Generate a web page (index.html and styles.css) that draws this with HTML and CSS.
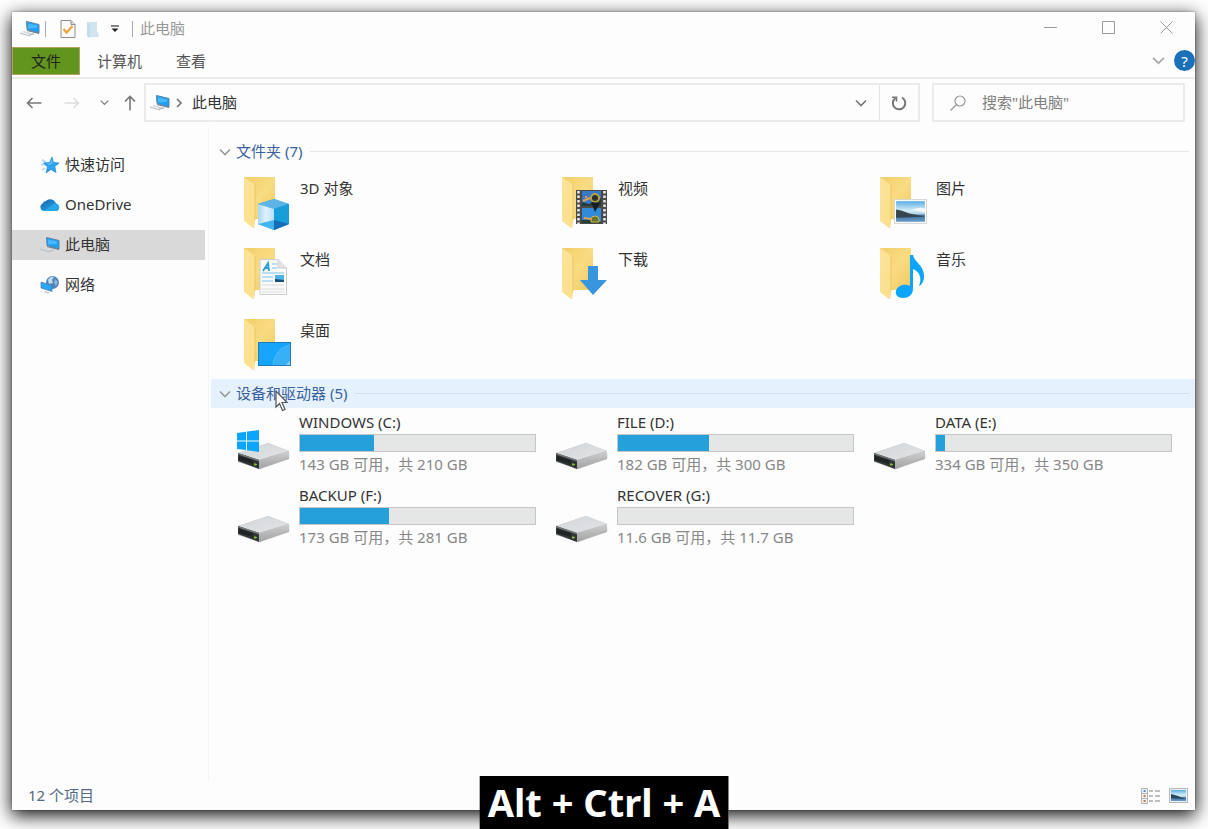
FILE: index.html
```html
<!DOCTYPE html>
<html lang="zh-CN">
<head>
<meta charset="utf-8">
<title>此电脑</title>
<link rel="stylesheet" href="styles.css">
</head>
<body>
<svg class="sprite" aria-hidden="true">
  <defs>
    <linearGradient id="g-back" x1="0" y1="0" x2="1" y2="1"><stop offset="0" stop-color="#f3cd68"/><stop offset=".5" stop-color="#f8dc82"/><stop offset="1" stop-color="#efc862"/></linearGradient>
    <linearGradient id="g-front" x1="0" y1="0" x2="1" y2="1"><stop offset="0" stop-color="#fbe39a"/><stop offset="1" stop-color="#fbdf8a"/></linearGradient>
    <linearGradient id="g-top" x1="0" y1="0" x2="1" y2="1"><stop offset="0" stop-color="#d3d6d9"/><stop offset="1" stop-color="#e2e4e6"/></linearGradient>
    <linearGradient id="g-side" x1="0" y1="0" x2="0" y2="1"><stop offset="0" stop-color="#cfcfcf"/><stop offset="1" stop-color="#a2a2a2"/></linearGradient>
    <linearGradient id="g-sky" x1="0" y1="0" x2="0" y2="1"><stop offset="0" stop-color="#5aaee4"/><stop offset=".45" stop-color="#d4ecf7"/><stop offset=".6" stop-color="#b9d6e4"/><stop offset=".7" stop-color="#3a6fa3"/><stop offset="1" stop-color="#6f9fc8"/></linearGradient>
    <linearGradient id="g-glass" x1="0" y1="0" x2="1" y2="0"><stop offset="0" stop-color="#a9d6f0"/><stop offset=".5" stop-color="#dff1fa"/><stop offset="1" stop-color="#b7e2f6"/></linearGradient>
    <linearGradient id="g-cloud" x1="0" y1="0" x2="1" y2="1"><stop offset="0" stop-color="#1262b3"/><stop offset="1" stop-color="#2eaee8"/></linearGradient>
  </defs>
  <symbol id="folder" viewBox="0 0 54 56">
    <path d="M7 1H38V43H18L7 40Z" fill="url(#g-back)"/>
    <path d="M7 1L18 9V44L16 52L7 45Z" fill="url(#g-front)"/>
    <path d="M18 9V44L17 52" fill="none" stroke="#edc765" stroke-width="1"/>
    <path d="M18 44L20 43L22 47L17 52Z" fill="#fffdf6"/>
  </symbol>
  <symbol id="pc" viewBox="0 0 20 16">
    <path d="M6.500 0.500L19 3.500V12L7 8.500Z" fill="#1d9ff3" stroke="#5d84a5" stroke-width="1"/>
    <path d="M8 2.500L17 4.500V7L8 7.500Z" fill="#49b9ff"/>
    <path d="M7 9L19 12V13L7 10Z" fill="#66798a"/>
    <path d="M4 10L15 13L11 14L2 11Z" fill="#d5d9dc"/>
    <path d="M0 12L10 15M9 14L14 13" stroke="#bdc2c6" stroke-width="1.300" fill="none"/>
  </symbol>
  <symbol id="drive" viewBox="0 0 54 28">
    <path d="M4 20L22 28L54 15L52 11L28 24Z" fill="#eee"/>
    <path d="M1 11L31 1L52 9V17L23 27L1 20Z" fill="#b3b3b3"/>
    <path d="M1 11L31 1L52 9L22 18Z" fill="url(#g-top)"/>
    <path d="M22 18L52 9V15L22 27Z" fill="url(#g-side)"/>
    <path d="M1 11L22 18V27L1 19Z" fill="#303638"/>
    <path d="M2 14L16 18V22L2 18Z" fill="#202524"/>
    <path d="M1 11L22 18V19.500L1 12.500Z" fill="#737878"/>
    <path d="M18 21V24M17 22.500H20" stroke="#85bd30" stroke-width="1"/>
  </symbol>
  <symbol id="landscape" viewBox="0 0 32 24">
    <rect x=".5" y=".5" width="31" height="23" fill="#fff" stroke="#d4d4d4"/>
    <rect x="2" y="2" width="28" height="20" fill="url(#g-sky)"/>
    <path d="M2 10L7 11L15 14L26 16L30 17L2 18Z" fill="#37454e"/>
    <path d="M17 10L26 8L30 9V13Z" fill="#f2f7f9"/>
  </symbol>
  <symbol id="chev" viewBox="0 0 12 12"><path d="M1 3.500L6 8.500L11 3.500" fill="none" stroke="currentColor" stroke-width="1.600"/></symbol>
</svg>

<div class="window">
  <header class="titlebar">
    <svg class="ico-pc"><use href="#pc"/></svg>
    <span class="sep sep-a"></span>
    <button class="quick" aria-label="属性">
      <svg width="16" height="18" viewBox="0 0 16 18"><path d="M1 .5H11L15 4.500V17.500H1Z" fill="#fafafa" stroke="#8e8e8e"/><path d="M11 .5V4.500H15" fill="#ddd" stroke="#8e8e8e"/><path d="M3.500 9L6.500 12.500L12.500 6" fill="none" stroke="#e9a53b" stroke-width="2.200"/></svg>
    </button>
    <button class="quick quick-folder" aria-label="新建文件夹">
      <svg width="13" height="17" viewBox="0 0 13 17"><path d="M1 1H11V11L12.500 12V16H4V17L1 15Z" fill="#d3e4f1"/><path d="M1 1L4 3V17L1 15Z" fill="#c5dcec"/></svg>
    </button>
    <button class="quick" aria-label="自定义快速访问工具栏">
      <svg width="8" height="8" viewBox="0 0 8 8"><path d="M0 1H8" stroke="#444" stroke-width="1.300"/><path d="M.5 3.500H7.500L4 7Z" fill="#222"/></svg>
    </button>
    <span class="sep sep-b"></span>
    <h1 class="title">此电脑</h1>
    <div class="controls">
      <button aria-label="最小化"><svg width="13" height="13" viewBox="0 0 13 13"><path d="M0 6.500H13"/></svg></button>
      <button aria-label="最大化"><svg width="13" height="13" viewBox="0 0 13 13"><path d="M.5 .5H12.500V12.500H.5Z"/></svg></button>
      <button aria-label="关闭"><svg width="13" height="13" viewBox="0 0 13 13"><path d="M.5 .5L12.500 12.500M12.500 .5L.5 12.500"/></svg></button>
    </div>
  </header>

  <nav class="ribbon">
    <button class="tab tab-file">文件</button>
    <button class="tab">计算机</button>
    <button class="tab">查看</button>
    <button class="expand" aria-label="展开功能区"><svg width="13" height="13"><use href="#chev"/></svg></button>
    <button class="help" aria-label="帮助">?</button>
  </nav>

  <div class="addressbar">
    <div class="history">
      <button aria-label="后退"><svg width="16" height="12" viewBox="0 0 16 12"><path d="M6.500 1L1.500 6L6.500 11M1.500 6H15.500"/></svg></button>
      <button class="dim" aria-label="前进"><svg width="16" height="12" viewBox="0 0 16 12"><path d="M9.500 1L14.500 6L9.500 11M14.500 6H.5"/></svg></button>
      <button class="narrow" aria-label="最近浏览的位置"><svg width="9" height="9"><use href="#chev"/></svg></button>
      <button class="narrow" aria-label="向上"><svg width="12" height="16" viewBox="0 0 12 16"><path d="M1 6.500L6 1.500L11 6.500M6 1.500V15.500"/></svg></button>
    </div>
    <div class="path">
      <svg class="ico-pc"><use href="#pc"/></svg>
      <svg class="crumb" width="6" height="10" viewBox="0 0 6 10"><path d="M1 1L5 5L1 9" fill="none" stroke="#777" stroke-width="1.600"/></svg>
      <span class="here">此电脑</span>
      <button class="drop" aria-label="以前的位置"><svg width="12" height="12"><use href="#chev"/></svg></button>
      <button class="refresh" aria-label="刷新"><svg width="16" height="16" viewBox="0 0 16 16"><path d="M4.500 3A6.200 6.200 0 1 0 11 2.600" fill="none" stroke="#777" stroke-width="2"/><path d="M1 2.200H5.500V6.500" fill="none" stroke="#777" stroke-width="1.600"/></svg></button>
    </div>
    <label class="search">
      <svg width="16" height="16" viewBox="0 0 16 16"><circle cx="10" cy="6" r="5" fill="none" stroke="#999" stroke-width="1.200"/><path d="M6.300 9.700L.5 15.500" stroke="#999" stroke-width="1.300"/></svg>
      <input type="text" placeholder='搜索"此电脑"' aria-label="搜索">
    </label>
  </div>

  <div class="body">
    <nav class="sidebar">
      <a href="#"><svg viewBox="0 0 20 20"><path d="M2 5L6 7M1 10L6 9M2 15L5 13" stroke="#b9dcf5" stroke-width="2"/><path d="M12 2L13.500 7.500L19 8L14.800 11.500L16 17.500L11 14.500L6 18L7.500 12L3.500 8L9.500 7.500Z" fill="#2ba3ee" stroke="#2586c9" stroke-width=".7"/><path d="M12 4L12.500 8L10 10L6 8.500L10 8.300Z" fill="#66c4fa"/></svg><span>快速访问</span></a>
      <a href="#"><svg viewBox="0 0 20 20"><path d="M4 16A4 4 0 0 1 2.500 8.500A5 5 0 0 1 6 6A6 6 0 0 1 16 8.500A4 4 0 0 1 17 16Z" fill="url(#g-cloud)"/><path d="M4 16L13 9.500L16 8.500A4 4 0 0 1 17 16Z" fill="#28a8ea"/></svg><span>OneDrive</span></a>
      <a href="#" class="current" aria-current="page"><svg viewBox="0 0 20 20"><g transform="translate(0 2)"><use href="#pc" width="20" height="16"/></g></svg><span>此电脑</span></a>
      <a href="#"><svg viewBox="0 0 20 20"><circle cx="12.500" cy="7.500" r="6.500" fill="#4f83bb"/><path d="M8 5C9 2 13 1 14 2L12 5L13 8L9 9Z" fill="#c5dced"/><path d="M15 4L18 7L16 11L14 8Z" fill="#8eb5d8"/><path d="M1 7L12 10.500V16.500L1 13Z" fill="#27a7f5" stroke="#4d7a9f" stroke-width=".7"/><path d="M5 16L10 17.500L8 18.500L4 17Z" fill="#bfc5ca"/></svg><span>网络</span></a>
    </nav>

    <main class="content">
      <section>
        <h2 class="group"><svg width="12" height="12"><use href="#chev"/></svg><span>文件夹 (7)</span></h2>
        <ul class="grid">
          <li class="folder"><svg viewBox="0 0 54 56"><use href="#folder" width="54" height="56"/><path d="M21 28L37 23L52 28V48L37 54L21 48Z" fill="#2399d8"/><path d="M21 28L37 23L52 28L37 33Z" fill="#5db4e6"/><path d="M21 28L37 33V54L21 48Z" fill="url(#g-glass)"/><path d="M37 33L52 28V48L37 54Z" fill="#169fdb"/><path d="M21 48L37 44V54Z" fill="#42b4f0"/><path d="M37 44L52 48L37 54Z" fill="#166eb8"/></svg><span>3D 对象</span></li>
          <li class="folder"><svg viewBox="0 0 54 56"><use href="#folder" width="54" height="56"/><rect x="21" y="14" width="31" height="34" fill="#4a4a4a"/><path d="M23.500 15V48M49.500 15V48" stroke="#ededed" stroke-width="2.500" stroke-dasharray="2.500 2"/><rect x="27" y="15" width="19" height="15" fill="#3979c4"/><rect x="27" y="32" width="19" height="15" fill="#318bd9"/><path d="M27 26L34 28L46 22V30H27ZM27 44L38 43L46 46V47H27Z" fill="#263d3c"/><path d="M28 25L35 22M30 21H32M29 42L36 43" stroke="#df9d5e" stroke-width="2"/><circle cx="40" cy="22" r="4" fill="#2c3030" stroke="#b5a340" stroke-width="2"/><path d="M36 26L45 27L40 36Z" fill="#151e25"/><path d="M36 44A4 4 0 0 1 44 44V46H36Z" fill="#65722d" stroke="#d3b94d"/></svg><span>视频</span></li>
          <li class="folder"><svg viewBox="0 0 54 56"><use href="#folder" width="54" height="56"/><use href="#landscape" x="21" y="23" width="33" height="25"/></svg><span>图片</span></li>
          <li class="folder"><svg viewBox="0 0 54 56"><use href="#folder" width="54" height="56"/><path d="M23 12.500H41L49.500 21V47.500H23Z" fill="#fafafa" stroke="#ccc"/><path d="M41 12.500V21H49.500" fill="#e3e3e3" stroke="#ccc"/><path d="M26 24L31 16L32 24M28 21H32" fill="none" stroke="#2b9ddb" stroke-width="1.800"/><path d="M35 17H40M35 21H40M25 26H47M25 30H36M25 34H36" stroke="#a4d6f3" stroke-width="1.300"/><path d="M25 38H47M25 42H47M25 45H47" stroke="#dadada"/><rect x="38" y="28" width="9" height="7" fill="#4fb3e8"/><path d="M38 32L47 33V35H38Z" fill="#1c4d78"/></svg><span>文档</span></li>
          <li class="folder"><svg viewBox="0 0 54 56"><use href="#folder" width="54" height="56"/><path d="M33 19H43V33H52L38 48L25 33H33Z" fill="#3896e0"/></svg><span>下载</span></li>
          <li class="folder"><svg viewBox="0 0 54 56"><use href="#folder" width="54" height="56"/><path d="M37 8H40C41 15 51 18 51 29C51 34 49 38 46 39C49 31 47 25 40 22V42C40 48 35 51 30 51C25 51 22 48 23 44C24 39 31 36 37 39Z" fill="#0ba6fb"/></svg><span>音乐</span></li>
          <li class="folder"><svg viewBox="0 0 54 56"><use href="#folder" width="54" height="56"/><rect x="21.500" y="24.500" width="32" height="23" fill="#16a5fa" stroke="#207db9"/><path d="M36 47C37 36 43 29 53 27V47Z" fill="#38b0f8"/><path d="M36 47C37 36 43 29 53 27" fill="none" stroke="#45bafa"/><path d="M49 47L53 43V47Z" fill="#8fd0f6"/></svg><span>桌面</span></li>
        </ul>
      </section>
      <section>
        <h2 class="group hover"><svg width="12" height="12"><use href="#chev"/></svg><span>设备和驱动器 (5)</span>
          <svg class="pointer" width="14" height="22" viewBox="0 0 14 22"><path d="M1 1V17L4.500 13.500L7.500 20.500L10 19.500L7 12.500H12Z" fill="#fff" stroke="#555" stroke-width="1.200"/></svg>
        </h2>
        <ul class="grid">
          <li class="drive"><svg viewBox="0 0 54 42"><use href="#drive" y="13" width="54" height="28"/><path d="M0 4L9 2.700V11.500H0ZM10 2.500L22 1V11.500H10ZM0 12.500H9V21L0 20ZM10 12.500H22V23L10 21.300Z" fill="#0ba6fb"/></svg><div class="info"><label for="c">WINDOWS (C:)</label><progress id="c" max="210" value="66"></progress><span>143 GB 可用，共 210 GB</span></div></li>
          <li class="drive"><svg viewBox="0 0 54 42"><use href="#drive" y="13" width="54" height="28"/></svg><div class="info"><label for="d">FILE (D:)</label><progress id="d" max="300" value="116"></progress><span>182 GB 可用，共 300 GB</span></div></li>
          <li class="drive"><svg viewBox="0 0 54 42"><use href="#drive" y="13" width="54" height="28"/></svg><div class="info"><label for="e">DATA (E:)</label><progress id="e" max="350" value="14"></progress><span>334 GB 可用，共 350 GB</span></div></li>
          <li class="drive"><svg viewBox="0 0 54 42"><use href="#drive" y="13" width="54" height="28"/></svg><div class="info"><label for="f">BACKUP (F:)</label><progress id="f" max="281" value="107"></progress><span>173 GB 可用，共 281 GB</span></div></li>
          <li class="drive"><svg viewBox="0 0 54 42"><use href="#drive" y="13" width="54" height="28"/></svg><div class="info"><label for="g">RECOVER (G:)</label><progress id="g" max="117" value="0"></progress><span>11.6 GB 可用，共 11.7 GB</span></div></li>
        </ul>
      </section>
    </main>
  </div>

  <footer class="status">
    <span>12 个项目</span>
    <div class="views">
      <button aria-label="详细信息"><svg width="19" height="16" viewBox="0 0 19 16"><path d="M.5 .5H6.500V15.500H.5ZM.5 5.500H6.500M.5 10.500H6.500" fill="#f3f3f3" stroke="#b5b5b5"/><path d="M8 3H12M14 3H19M8 8H12M14 8H19M8 13H12M14 13H19" stroke="#a9a9a9" stroke-width="1.500"/><path d="M2.500 3H4.500" stroke="#4a8fe0" stroke-width="2"/><path d="M2.500 8H4.500M2.500 13H4.500" stroke="#b97a4c" stroke-width="2"/></svg></button>
      <button aria-label="大图标"><svg width="19" height="15" viewBox="0 0 19 15"><rect x=".5" y=".5" width="18" height="14" fill="#eee" stroke="#b8b8b8"/><rect x="2" y="2" width="15" height="11" fill="url(#g-sky)"/><path d="M2 6L9 8L16 11L2 10Z" fill="#2c4555"/></svg></button>
    </div>
  </footer>
</div>
<div class="keys">Alt + Ctrl + A</div>
</body>
</html>
```
FILE: styles.css
```css
* { box-sizing: border-box; }

body {
  margin: 0;
  min-height: 100vh;
  display: flex;
  padding: 12px 13px 19px 12px;
  background: #fff;
  color: #333;
  font: 15px/20px "Noto Sans", "Noto Sans CJK SC", sans-serif;
}

button {
  border: 0;
  padding: 0;
  background: none;
  color: inherit;
  font: inherit;
  display: flex;
  align-items: center;
  justify-content: center;
}

svg { display: block; flex: none; }
.sprite { position: absolute; width: 0; height: 0; }

.window {
  flex: 1;
  min-width: 0;
  display: flex;
  flex-direction: column;
  background: #fdfdfd;
  box-shadow: 0 0 2px rgba(0, 0, 0, .4), 0 5px 17px 1px rgba(0, 0, 0, .9);
}

.ico-pc { width: 20px; height: 16px; }

.titlebar { display: flex; align-items: center; height: 34px; padding-left: 8px; }
.sep { width: 1px; height: 16px; background: #aaa; }
.sep-a { margin: 0 14px 0 5px; }
.sep-b { margin: 0 7px 0 13px; }
.quick-folder { margin: 0 12px 0 10px; }
.title { margin: 0; padding-bottom: 2px; font-size: 15px; font-weight: 400; color: #999; }
.controls { display: flex; align-self: stretch; margin-left: auto; }
.controls button { width: 58px; padding-bottom: 3px; }
.controls svg { fill: none; stroke: #999; stroke-width: 1; }

.ribbon { display: flex; align-items: center; height: 33px; padding-bottom: 2px; border-bottom: 2px solid #ebebeb; }
.tab { padding: 0 17px; height: 28px; color: #555; }
.tab-file { width: 68px; background: #61951d; color: #222; border: 1px solid #b6a05f; }
.expand { margin-left: auto; color: #aaa; }
.help { width: 21px; height: 21px; margin-left: 9px; border-radius: 50%; background: #1b70ba; color: #fff; }

.addressbar { display: flex; height: 48px; padding: 4px 10px 5px 0; }
.history { display: flex; width: 132px; padding-left: 3px; color: #777; }
.history button { width: 38px; }
.history .narrow { width: 26px; }
.history svg { fill: none; stroke: currentColor; stroke-width: 1.6; }
.history .dim { color: #ddd; }
.path { display: flex; align-items: center; flex: 1; border: 2px solid #ebebeb; padding-left: 4px; color: #333; }
.crumb { margin: 0 10px 0 6px; }
.here { padding-bottom: 1px; }
.drop { align-self: stretch; width: 36px; margin-left: auto; color: #777; }
.refresh { align-self: stretch; width: 39px; border-left: 1px solid #e3e3e3; }
.search { display: flex; align-items: center; gap: 16px; width: 253px; margin-left: 12px; border: 2px solid #ebebeb; padding-left: 16px; }
.search input { flex: 1; min-width: 0; padding: 0 0 1px; border: 0; outline: 0; background: none; font: inherit; }
.search input::placeholder { color: #808080; opacity: 1; }

.body { flex: 1; display: flex; }
.sidebar { display: flex; flex-direction: column; gap: 10px; width: 197px; padding: 23px 3px 0 0; border-right: 1px solid #f3f3f3; }
.sidebar a { display: flex; align-items: center; gap: 5px; height: 30px; padding-left: 28px; color: #333; text-decoration: none; }
.sidebar .current { background: #d9d9d9; }
.sidebar svg { width: 20px; height: 20px; }
.sidebar span { padding-bottom: 2px; }

.content { flex: 1; padding: 10px 0 0 2px; }
.group { position: relative; display: flex; align-items: center; height: 29px; margin: 0; padding: 0 6px 0 8px; gap: 5px; font-size: 15px; font-weight: 400; color: #3a62a0; }
.group > svg:first-child { color: #999; }
.group span { padding-bottom: 2px; }
.group::after { content: ""; flex: 1; height: 1px; margin-left: 3px; background: #e6e6e6; }
.group.hover { background: #e5f2fd; }
.group.hover::after { background: #cfdfec; }
.group .pointer { position: absolute; left: 64px; top: 11px; }

.grid { display: grid; grid-template-columns: repeat(auto-fill, 318px); margin: 0; padding: 0 0 0 26px; list-style: none; }
.folder { display: flex; gap: 9px; height: 71px; padding-top: 10px; }
.folder svg { width: 54px; height: 56px; }
.folder span { padding-top: 2px; }
.drive { display: flex; gap: 8px; height: 73px; padding-top: 4px; }
.drive > svg { width: 54px; height: 42px; margin-top: 17px; }
.info { display: flex; flex-direction: column; width: 237px; }
.info progress { appearance: none; width: 100%; height: 18px; margin: 2px 0; border: 1px solid #c6c6c6; background: #e5e6e6; }
.info progress::-webkit-progress-bar { background: #e5e6e6; }
.info progress::-webkit-progress-value { background: #26a0da; }
.info span { color: #888; }

.status { display: flex; align-items: center; justify-content: space-between; height: 29px; padding: 0 7px 0 16px; color: #536a82; }
.status span { padding-bottom: 2px; }
.views { display: flex; gap: 9px; }

.keys {
  position: fixed;
  bottom: 0;
  left: 50%;
  transform: translateX(-50%);
  padding: 0 8px;
  background: #000;
  color: #fff;
  font-size: 38px;
  font-weight: 700;
  line-height: 53px;
  white-space: nowrap;
}
```
